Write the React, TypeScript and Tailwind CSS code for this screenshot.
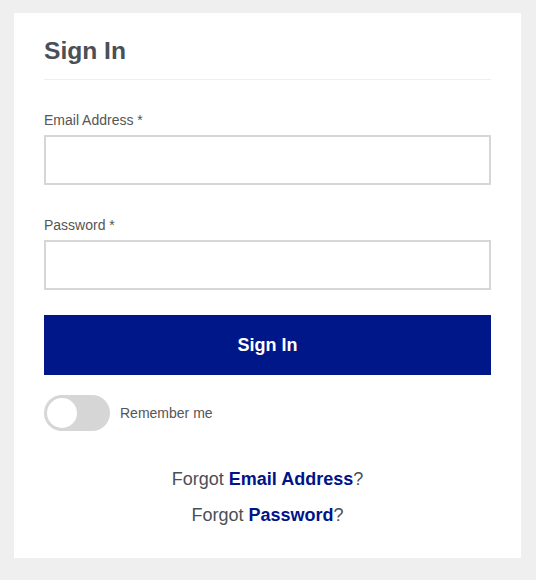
export default function App() {
  return (
    <div className="min-h-[580px] bg-[#efefef] pt-[13px] pb-[23px]" style={{ fontFamily: '"Liberation Sans", Arial, sans-serif' }}>
      <div className="ml-[14px] w-[507px] bg-white px-[30px] pt-[23px] pb-[25px]">
        <h1 className="text-[24.6px] leading-[29px] font-bold text-[#4b4f56] pb-[14px] border-b border-[#eeeeee]">Sign In</h1>
        <div className="mt-[30px]">
          <label className="block text-[14px] leading-[20px] text-[#555555]">Email Address *</label>
          <input type="email" className="mt-[5px] block w-full h-[50px] border-2 border-[#d6d6d6] bg-white outline-none" />
        </div>
        <div className="mt-[30px]">
          <label className="block text-[14px] leading-[20px] text-[#555555]">Password *</label>
          <input type="password" className="mt-[5px] block w-full h-[50px] border-2 border-[#d6d6d6] bg-white outline-none" />
        </div>
        <button className="mt-[25px] block w-full h-[60px] bg-[#00178a] text-white text-[18px] font-bold">Sign In</button>
        <div className="mt-[20px] flex items-center">
          <div className="relative w-[66px] h-[36px] rounded-full bg-[#d6d6d6]">
            <div className="absolute left-[3px] top-[3px] w-[30px] h-[30px] rounded-full bg-white" />
          </div>
          <span className="ml-[10px] text-[14px] text-[#555555]">Remember me</span>
        </div>
        <div className="mt-[30px] text-center text-[18px] leading-[36px] text-[#4b4f56]">
          <p>Forgot <a href="#" className="font-bold text-[#00148a]">Email Address</a>?</p>
          <p>Forgot <a href="#" className="font-bold text-[#00148a]">Password</a>?</p>
        </div>
      </div>
    </div>
  );
}
